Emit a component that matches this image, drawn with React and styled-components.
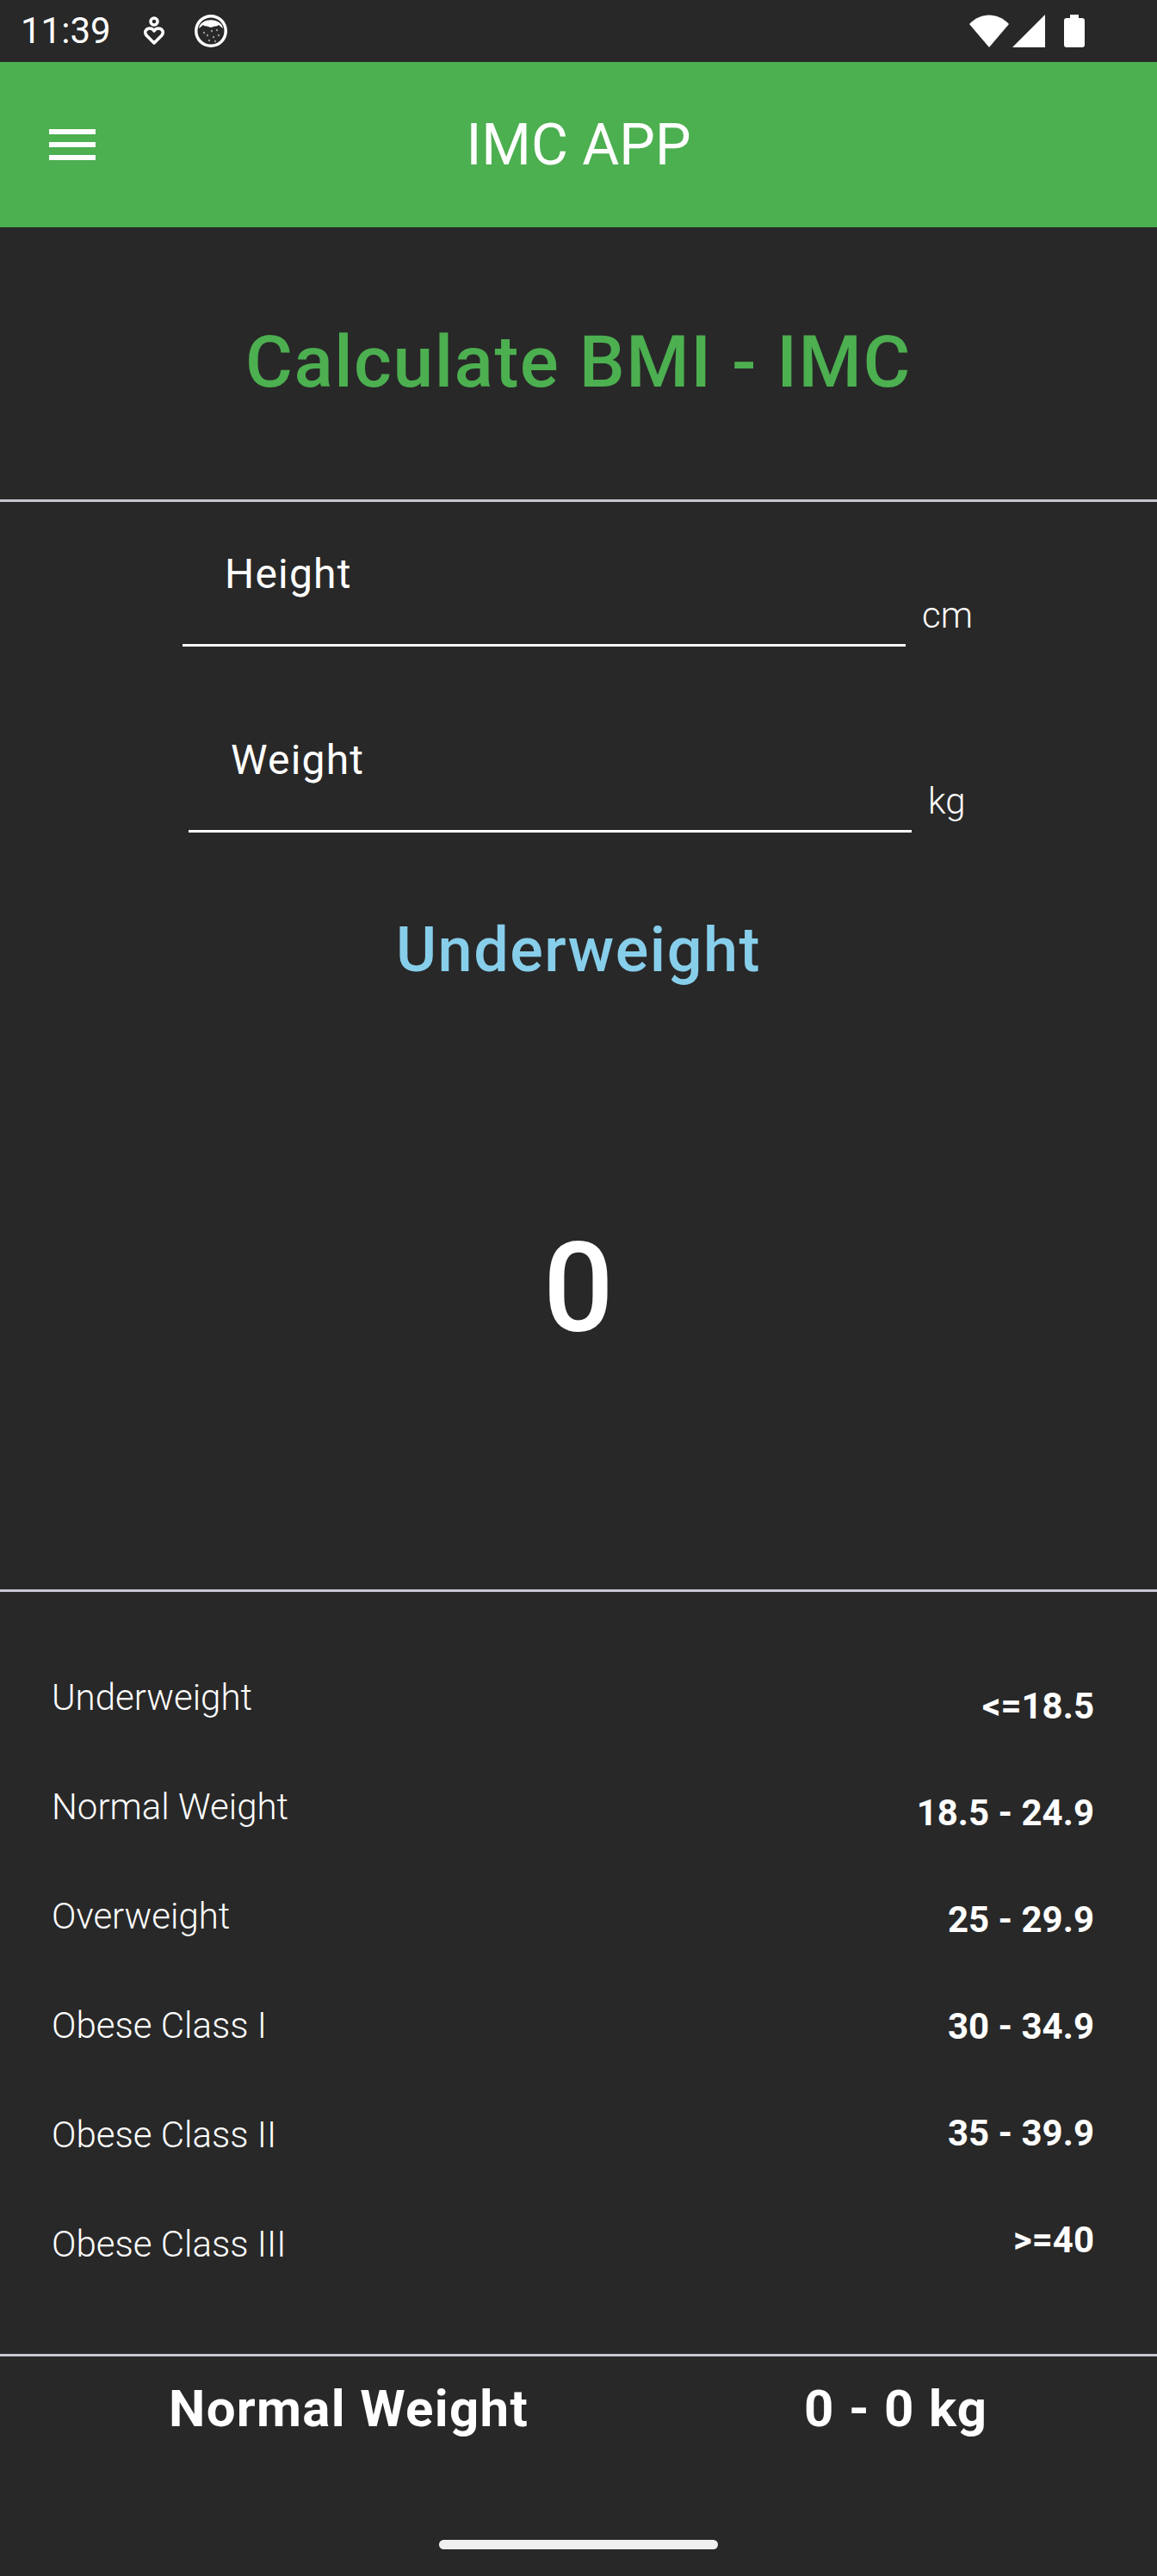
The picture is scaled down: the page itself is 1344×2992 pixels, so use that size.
import React from "react"
import styled, { createGlobalStyle } from "styled-components"

const labels = ["Underweight", "Normal Weight", "Overweight", "Obese Class I", "Obese Class II", "Obese Class III"]
const ranges = ["<=18.5", "18.5 - 24.9", "25 - 29.9", "30 - 34.9", "35 - 39.9", ">=40"]

const App = () => (
  <Screen>
    <GlobalStyle />
    <StatusBar>
      <Clock>11:39</Clock>
      <StatusIcons>
        <svg width="24" height="34" viewBox="0 0 24 34" fill="none" stroke="#fff" strokeWidth="3.5" strokeLinejoin="round">
          <circle cx="12" cy="6" r="4" />
          <path d="M12 31 L3.5 22.5 C-0.5 18 3 14 7 14 C9 14 11 15 12 17 C13 15 15 14 17 14 C21 14 24.5 18 20.5 22.5 Z" />
        </svg>
        <svg width="38" height="38" viewBox="0 0 38 38">
          <circle cx="19" cy="19" r="19" fill="#fff" />
          <circle cx="19" cy="19" r="15.5" fill="#282828" />
          <path d="M5 16 C7 3 31 3 33 16 C31 15 30 13 28 12 C26 14 24 13 22 14 C20 15 18 15 16 14 C14 13 12 14 10 12 C8 13 7 15 5 16 Z" fill="#fff" />
          <circle cx="11" cy="21" r="1.2" fill="#999" />
          <circle cx="20" cy="19" r="1.2" fill="#999" />
          <circle cx="26" cy="18" r="1.2" fill="#999" />
          <circle cx="28" cy="24" r="1.2" fill="#999" />
          <circle cx="15" cy="24" r="1.2" fill="#999" />
          <circle cx="22" cy="26" r="1.2" fill="#999" />
          <circle cx="17" cy="30" r="1.2" fill="#999" />
          <circle cx="24" cy="31" r="1.2" fill="#999" />
        </svg>
      </StatusIcons>
      <SystemIcons>
        <svg width="46" height="38" viewBox="0 0 46 38">
          <path d="M0 11 C13 -3 33 -3 46 11 L23 38 Z" fill="#fff" />
        </svg>
        <svg width="38" height="38" viewBox="0 0 38 38">
          <path d="M38 0 V38 H0 Z" fill="#fff" />
        </svg>
        <BatteryIcon width="24" height="38" viewBox="0 0 24 38">
          <path d="M7 0 H17 V4 H21 C23 4 24 5 24 7 V35 C24 37 23 38 21 38 H3 C1 38 0 37 0 35 V7 C0 5 1 4 3 4 H7 Z" fill="#fff" />
        </BatteryIcon>
      </SystemIcons>
    </StatusBar>

    <Header>
      <MenuButton>
        <svg width="54" height="36" viewBox="0 0 54 36" fill="#fff">
          <rect y="0" width="54" height="6" />
          <rect y="15" width="54" height="6" />
          <rect y="30" width="54" height="6" />
        </svg>
      </MenuButton>
      <HeaderTitle>IMC APP</HeaderTitle>
    </Header>

    <TitleBlock>
      <Title>Calculate BMI - IMC</Title>
    </TitleBlock>
    <Divider />

    <Form>
      <FieldRow $indent={212}>
        <Field>
          <FieldLabel>Height</FieldLabel>
        </Field>
        <Unit>cm</Unit>
      </FieldRow>
      <FieldRow $indent={219}>
        <Field>
          <FieldLabel>Weight</FieldLabel>
        </Field>
        <Unit>kg</Unit>
      </FieldRow>
    </Form>

    <Result>
      <Category>Underweight</Category>
      <Score>0</Score>
    </Result>
    <Divider />

    <Table>
      <Column>
        {labels.map((label) => (
          <RowLabel key={label}>{label}</RowLabel>
        ))}
      </Column>
      <Column $right>
        {ranges.map((range) => (
          <RowValue key={range}>{range}</RowValue>
        ))}
      </Column>
    </Table>
    <Divider />

    <Footer>
      <FooterText>Normal Weight</FooterText>
      <FooterText>0 - 0 kg</FooterText>
    </Footer>
    <HomeBar>
      <HomePill />
    </HomeBar>
  </Screen>
)

const GlobalStyle = createGlobalStyle`
  html, body {
    margin: 0;
    background: #282828;
  }
  * {
    box-sizing: border-box;
  }
`

const Screen = styled.div`
  width: 1344px;
  height: 2992px;
  overflow: hidden;
  display: flex;
  flex-direction: column;
  background: #282828;
  color: #fff;
  font-family: Roboto, "Liberation Sans", sans-serif;
`

const StatusBar = styled.div`
  height: 72px;
  flex: none;
  display: flex;
  align-items: center;
  padding: 0 84px 0 24px;
`

const Clock = styled.div`
  font-size: 42px;
  line-height: 72px;
  width: 143px;
`

const StatusIcons = styled.div`
  display: flex;
  align-items: center;
  gap: 35px;
`

const SystemIcons = styled.div`
  margin-left: auto;
  display: flex;
  align-items: center;
  gap: 4px;
`

const BatteryIcon = styled.svg`
  margin-left: 18px;
`

const Header = styled.header`
  height: 192px;
  flex: none;
  background: #4caf50;
  display: flex;
  align-items: center;
  justify-content: center;
  position: relative;
`

const MenuButton = styled.div`
  position: absolute;
  left: 57px;
  top: 78px;
  display: flex;
`

const HeaderTitle = styled.h1`
  margin: 0;
  font-size: 66px;
  font-weight: 400;
`

const TitleBlock = styled.div`
  height: 316px;
  flex: none;
  padding-bottom: 3px;
  display: flex;
  align-items: center;
  justify-content: center;
`

const Title = styled.h2`
  margin: 0;
  font-size: 84px;
  font-weight: 500;
  letter-spacing: 1.5px;
  color: #4caf50;
`

const Divider = styled.div`
  height: 3px;
  flex: none;
  background: #c8c6d2;
`

const Form = styled.div`
  display: flex;
  flex-direction: column;
  flex: none;
  gap: 48px;
  height: 384px;
`

const FieldRow = styled.div`
  display: flex;
  align-items: flex-end;
  padding-left: ${(p) => p.$indent}px;
  height: 168px;
`

const Field = styled.div`
  width: 840px;
  height: 168px;
  border-bottom: 3px solid #fff;
  padding: 56px 0 0 49px;
`

const FieldLabel = styled.div`
  font-size: 48px;
  line-height: 56px;
  letter-spacing: 1.2px;
`

const Unit = styled.div`
  margin-left: 19px;
  margin-bottom: 11px;
  font-size: 42px;
  line-height: 50px;
  font-weight: 300;
`

const Result = styled.div`
  flex: none;
  height: 879px;
  padding-top: 97px;
  display: flex;
  flex-direction: column;
  align-items: center;
`

const Category = styled.div`
  font-size: 72px;
  font-weight: 500;
  letter-spacing: 1.5px;
  color: #87ceeb;
  line-height: 80px;
`

const Score = styled.div`
  font-size: 144px;
  font-weight: 500;
  line-height: 170px;
  margin-top: 268px;
`

const Table = styled.div`
  height: 885px;
  flex: none;
  display: flex;
  justify-content: space-between;
  padding: 0 73px 0 60px;
`

const Column = styled.div`
  display: flex;
  flex-direction: column;
  align-items: ${(p) => (p.$right ? "flex-end" : "flex-start")};
  padding-top: ${(p) => (p.$right ? 109 : 99)}px;
  gap: ${(p) => (p.$right ? 77 : 80)}px;
`

const RowLabel = styled.div`
  font-size: 42px;
  font-weight: 300;
  line-height: 47px;
`

const RowValue = styled.div`
  font-size: 42px;
  font-weight: 700;
  line-height: 47px;
`

const Footer = styled.div`
  flex: none;
  height: 120px;
  display: flex;
  align-items: center;
  padding-left: 196px;
  gap: 320px;
`

const FooterText = styled.div`
  font-size: 60px;
  font-weight: 700;
  letter-spacing: 1.3px;
`

const HomeBar = styled.div`
  flex: 1;
  display: flex;
  justify-content: center;
  padding-top: 93px;
`

const HomePill = styled.div`
  width: 324px;
  height: 11px;
  border-radius: 6px;
  background: #f0f0f0;
`

export default App
